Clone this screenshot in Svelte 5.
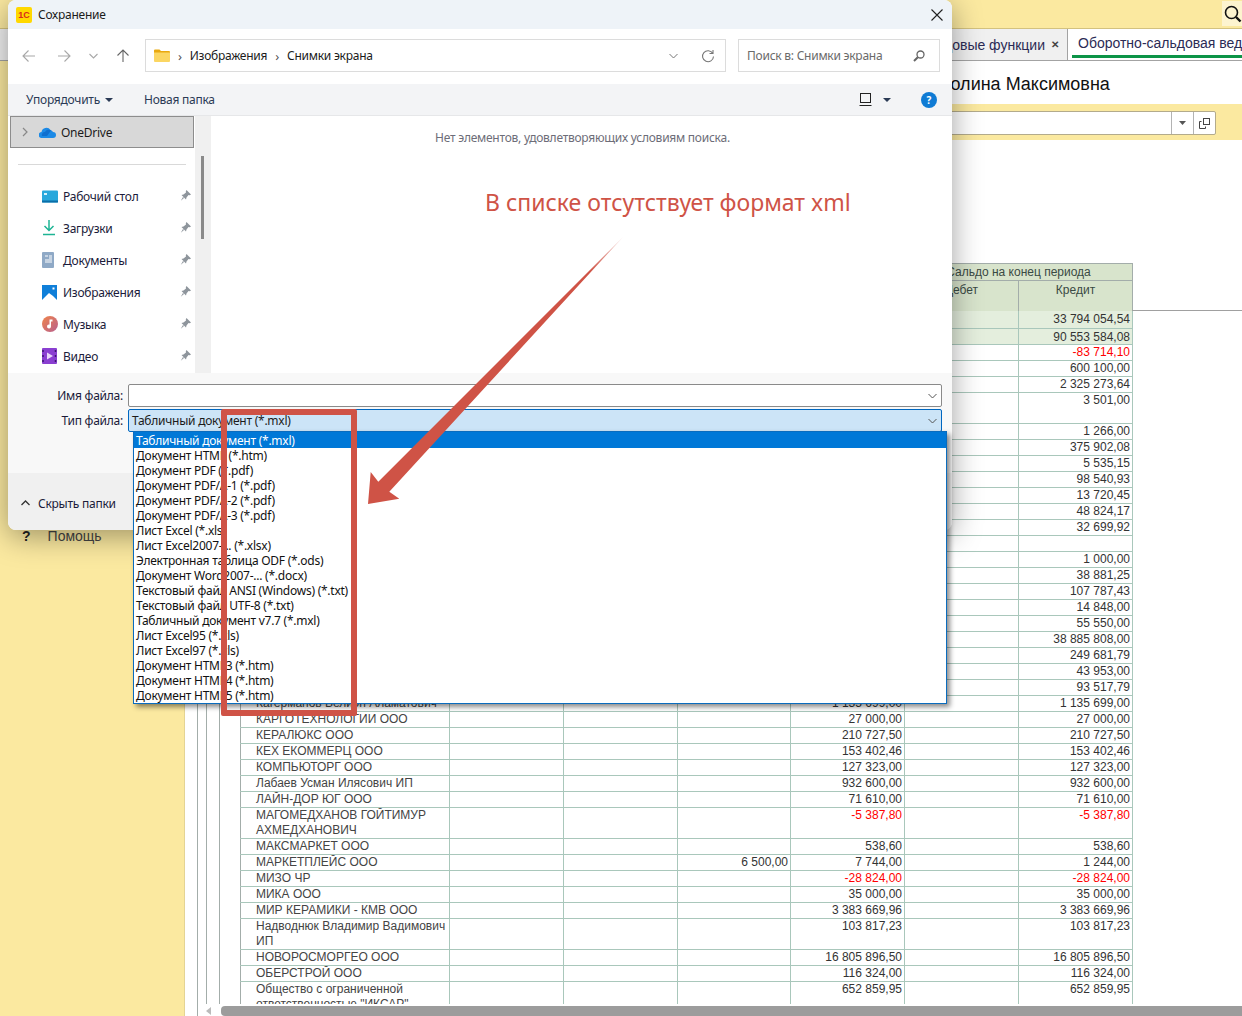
<script>
  const navItems = ['Рабочий стол', 'Загрузки', 'Документы', 'Изображения', 'Музыка', 'Видео'];

  const fileTypes = [
    'Табличный документ (*.mxl)',
    'Документ HTML (*.htm)',
    'Документ PDF (*.pdf)',
    'Документ PDF/A-1 (*.pdf)',
    'Документ PDF/A-2 (*.pdf)',
    'Документ PDF/A-3 (*.pdf)',
    'Лист Excel (*.xls)',
    'Лист Excel2007-... (*.xlsx)',
    'Электронная таблица ODF (*.ods)',
    'Документ Word2007-... (*.docx)',
    'Текстовый файл ANSI (Windows) (*.txt)',
    'Текстовый файл UTF-8 (*.txt)',
    'Табличный документ v7.7 (*.mxl)',
    'Лист Excel95 (*.xls)',
    'Лист Excel97 (*.xls)',
    'Документ HTML3 (*.htm)',
    'Документ HTML4 (*.htm)',
    'Документ HTML5 (*.htm)'
  ];

  // name, оборот дебет, оборот кредит, кредит на конец, height
  const rows = [
    { c: '33 794 054,54', h: 18, total: true },
    { c: '90 553 584,08', total: true },
    { c: '-83 714,10' },
    { c: '600 100,00' },
    { c: '2 325 273,64' },
    { c: '3 501,00', h: 31 },
    { c: '1 266,00' },
    { c: '375 902,08' },
    { c: '5 535,15' },
    { c: '98 540,93' },
    { c: '13 720,45' },
    { c: '48 824,17' },
    { c: '32 699,92' },
    { c: '' },
    { c: '1 000,00' },
    { c: '38 881,25' },
    { c: '107 787,43' },
    { c: '14 848,00' },
    { c: '55 550,00' },
    { c: '38 885 808,00' },
    { c: '249 681,79' },
    { c: '43 953,00' },
    { c: '93 517,79' },
    { name: 'Кагерманов Велиэн Аламатович', b: '1 135 699,00', c: '1 135 699,00' },
    { name: 'КАРГОТЕХНОЛОГИИ ООО', b: '27 000,00', c: '27 000,00' },
    { name: 'КЕРАЛЮКС ООО', b: '210 727,50', c: '210 727,50' },
    { name: 'КЕХ ЕКОММЕРЦ ООО', b: '153 402,46', c: '153 402,46' },
    { name: 'КОМПЬЮТОРГ ООО', b: '127 323,00', c: '127 323,00' },
    { name: 'Лабаев Усман Илясович ИП', b: '932 600,00', c: '932 600,00' },
    { name: 'ЛАЙН-ДОР ЮГ ООО', b: '71 610,00', c: '71 610,00' },
    { name: 'МАГОМЕДХАНОВ ГОЙТИМУР АХМЕДХАНОВИЧ', b: '-5 387,80', c: '-5 387,80', h: 31 },
    { name: 'МАКСМАРКЕТ ООО', b: '538,60', c: '538,60' },
    { name: 'МАРКЕТПЛЕЙС ООО', a: '6 500,00', b: '7 744,00', c: '1 244,00' },
    { name: 'МИЗО ЧР', b: '-28 824,00', c: '-28 824,00' },
    { name: 'МИКА ООО', b: '35 000,00', c: '35 000,00' },
    { name: 'МИР КЕРАМИКИ - КМВ ООО', b: '3 383 669,96', c: '3 383 669,96' },
    { name: 'Надводнюк Владимир Вадимович ИП', b: '103 817,23', c: '103 817,23', h: 31 },
    { name: 'НОВОРОСМОРГЕО ООО', b: '16 805 896,50', c: '16 805 896,50' },
    { name: 'ОБЕРСТРОЙ ООО', b: '116 324,00', c: '116 324,00' },
    { name: 'Общество с ограниченной ответственностью "ИКСАР"', b: '652 859,95', c: '652 859,95', h: 31 }
  ];

  const isNeg = (v) => v && v.startsWith('-');
</script>

<div class="desktop">
  <div class="topbar">
    <span class="search-btn">
      <svg width="18" height="18" viewBox="0 0 18 18" fill="none" stroke="#111" stroke-width="1.6"><circle cx="7.5" cy="7.5" r="6"/><path d="M12 12l4.5 4.5" stroke-width="2.4"/></svg>
    </span>
  </div>
  <div class="tabs">
    <div class="tab">Годовые функции <span class="tab-x">✕</span></div>
    <div class="tab active"><span class="tab-label">Оборотно-сальдовая ведомость</span></div>
  </div>

  <div class="app-body">
    <aside class="sidebar">
      <div class="help"><span class="help-q">?</span>Помощь</div>
    </aside>
    <main class="content">
      <h1 class="title">Каролина Максимовна</h1>
      <div class="band">
        <div class="select">
          <span class="select-btn">
            <svg width="7" height="4" viewBox="0 0 7 4"><path d="M0 0h7L3.5 4z" fill="#555"/></svg>
          </span>
          <span class="select-btn">
            <svg width="11" height="11" viewBox="0 0 11 11" fill="none" stroke="#444"><rect x="4.5" y="0.5" width="6" height="6"/><path d="M2.5 3.5h-2v7h6v-2"/></svg>
          </span>
        </div>
      </div>

      <div class="report">
        <div class="groups">
          <div class="group2"><div class="group3">
            <div class="thead">
              <div class="grid">
                <div class="th empty"></div>
                <div class="th empty"></div>
                <div class="th empty"></div>
                <div class="th empty"></div>
                <div class="th empty"></div>
                <div class="th wide">Сальдо на конец периода</div>
                <div class="th sub">Дебет</div>
                <div class="th sub">Кредит</div>
              </div>
            </div>
            {#each rows as r}
              <div class="row" class:total={r.total} style="height:{r.h ?? 16}px">
                <div class="cell name">{r.name ?? ''}</div>
                <div class="cell"></div>
                <div class="cell"></div>
                <div class="cell num">{r.a ?? ''}</div>
                <div class="cell num" class:neg={isNeg(r.b)}>{r.b ?? ''}</div>
                <div class="cell"></div>
                <div class="cell num" class:neg={isNeg(r.c)}>{r.c}</div>
              </div>
            {/each}
          </div></div>
        </div>
        <div class="hscroll">
          <svg width="6" height="8" viewBox="0 0 6 8"><path d="M5 0v8L0 4z" fill="#bbb"/></svg>
          <div class="hthumb"></div>
        </div>
      </div>
    </main>
  </div>

  <section class="dialog">
    <header class="titlebar">
      <span class="logo">1С</span>
      <span class="dialog-title">Сохранение</span>
      <svg class="close" width="12" height="12" viewBox="0 0 12 12" stroke="#222" stroke-width="1.1"><path d="M.5.5l11 11M11.500.5l-11 11"/></svg>
    </header>

    <div class="navbar">
      <div class="nav-btns">
        <svg width="14" height="14" viewBox="0 0 14 14" fill="none" stroke="#a8a8a8" stroke-width="1.1"><path d="M13 7H1M6.500 1.500L1 7l5.500 5.500"/></svg>
        <svg width="14" height="14" viewBox="0 0 14 14" fill="none" stroke="#a8a8a8" stroke-width="1.1"><path d="M1 7h12M7.500 1.500L13 7l-5.500 5.500"/></svg>
        <svg width="9" height="6" viewBox="0 0 9 6" fill="none" stroke="#a8a8a8" stroke-width="1.100"><path d="M.5 1l4 4 4-4"/></svg>
        <svg width="14" height="14" viewBox="0 0 14 14" fill="none" stroke="#666" stroke-width="1.1"><path d="M7 13V1M1.500 6.500L7 1l5.500 5.500"/></svg>
      </div>
      <div class="address">
        <svg width="16" height="13" viewBox="0 0 16 13"><path d="M0 1.500A1 1 0 0 1 1 .5h4.500l1.500 1.500h8a1 1 0 0 1 1 1V4H0z" fill="#e9a90f"/><path d="M0 3.500h16v8.500a1 1 0 0 1-1 1H1a1 1 0 0 1-1-1z" fill="#fbd662"/></svg>
        <span class="crumb-sep">›</span>
        <span>Изображения</span>
        <span class="crumb-sep">›</span>
        <span>Снимки экрана</span>
        <span class="address-tools">
          <svg width="9" height="6" viewBox="0 0 9 6" fill="none" stroke="#777"><path d="M.5 1l4 4 4-4"/></svg>
          <svg width="14" height="14" viewBox="0 0 14 14" fill="none" stroke="#777" stroke-width="1.1"><path d="M11.800 4.500A5.500 5.500 0 1 0 12.500 7.500M12 1v3.500H8.500"/></svg>
        </span>
      </div>
      <div class="searchbox">
        <span>Поиск в: Снимки экрана</span>
        <svg width="12" height="12" viewBox="0 0 12 12" fill="none" stroke="#666"><circle cx="7.500" cy="4.500" r="3.500" stroke-width="1.300"/><path d="M4.800 7.200L1 11" stroke-width="2"/></svg>
      </div>
    </div>

    <div class="toolbar">
      <span>Упорядочить</span>
      <svg class="caret" width="8" height="4" viewBox="0 0 8 4"><path d="M0 0h8L4 4z" fill="#2b3a55"/></svg>
      <span class="newfolder">Новая папка</span>
      <span class="toolbar-right">
        <svg width="13" height="13" viewBox="0 0 13 13" fill="none" stroke="#222"><rect x="1.500" y="0.500" width="10" height="9"/><path d="M.5 12.500h12" stroke-width="1.200"/></svg>
        <svg class="caret2" width="8" height="4" viewBox="0 0 8 4"><path d="M0 0h8L4 4z" fill="#2b3a55"/></svg>
        <span class="help-circle">?</span>
      </span>
    </div>

    <div class="browser">
      <nav class="tree">
        <div class="onedrive">
          <svg width="6" height="10" viewBox="0 0 6 10" fill="none" stroke="#888" stroke-width="1.200"><path d="M1 1l4 4-4 4"/></svg>
          <svg width="17" height="11" viewBox="0 0 17 11"><path d="M3 11a3 3 0 0 1-.5-6 5 5 0 0 1 9-2 4 4 0 0 1 2.500 2 3 3 0 0 1 0 6z" fill="#1c8ae6"/><path d="M6 5a4 4 0 0 1 6-1.500L8 9H3a3 3 0 0 1 3-4z" fill="#0f6fcf"/></svg>
          <span>OneDrive</span>
        </div>
        <div class="tree-sep"></div>
        {#each navItems as item, i}
          <div class="tree-item">
            <span class="tree-icon">
              {#if i === 0}
                <svg width="16" height="13" viewBox="0 0 16 13"><rect width="16" height="12" y="0.500" rx="1" fill="#28a8dc"/><rect x="2" y="3" width="3" height="2" fill="#d5f2fb"/><rect x="0" y="10.500" width="16" height="2" fill="#0b6ea8"/></svg>
              {:else if i === 1}
                <svg width="14" height="16" viewBox="0 0 14 16" fill="none" stroke="#1eb494" stroke-width="1.500"><path d="M7 0v10M2.500 6L7 10.500 11.500 6"/><path d="M1 14.500h12"/></svg>
              {:else if i === 2}
                <svg width="13" height="16" viewBox="0 0 13 16"><rect width="12" height="16" rx="1" fill="#8fa9c6"/><path d="M3 4h3M7 4h3M7 6h3M3 8h7M3 10h7" stroke="#fff" stroke-width="1"/></svg>
              {:else if i === 3}
                <svg width="15" height="15" viewBox="0 0 15 15"><rect width="15" height="15" fill="#0f7fd9"/><path d="M0 15l7-7 4 3 4 4z" fill="#fff"/><rect x="10.500" y="2.500" width="2" height="2" fill="#fff"/></svg>
              {:else if i === 4}
                <svg width="16" height="16" viewBox="0 0 16 16"><defs><linearGradient id="mus" x1="0" y1="0" x2="1" y2="1"><stop offset="0" stop-color="#f0844a"/><stop offset="1" stop-color="#b8608f"/></linearGradient></defs><circle cx="8" cy="8" r="8" fill="url(#mus)"/><path d="M7.500 3.500h3v2h-1.500v5a2 2 0 1 1-1.500-2z" fill="#fff"/></svg>
              {:else}
                <svg width="15" height="16" viewBox="0 0 15 16"><rect width="15" height="16" rx="1" fill="#8a3fd1"/><path d="M5 4.500l6 3.500-6 3.500z" fill="#e8d6fa"/><path d="M1 2v2M1 7v2M1 12v2M13.500 2v2M13.500 7v2M13.500 12v2" stroke="#3c1670" stroke-width="1.500"/></svg>
              {/if}
            </span>
            <span>{item}</span>
            <svg class="pin" width="11" height="11" viewBox="0 0 11 11"><path d="M6.500 0L11 4.500 9.800 5.200 8.500 5 6.500 7.500 6 9.500 1.500 5 3.500 4.500 6 2.500 5.800 1.200zM3 7l1 1L.8 10.800z" fill="#8e959c"/></svg>
          </div>
        {/each}
      </nav>
      <div class="tree-scroll"><div class="tree-thumb"></div></div>
      <div class="files">
        <p class="empty-msg">Нет элементов, удовлетворяющих условиям поиска.</p>
      </div>
    </div>

    <div class="form">
      <div class="form-row">
        <span class="form-label">Имя файла:</span>
        <div class="field">
          <svg width="9" height="6" viewBox="0 0 9 6" fill="none" stroke="#555"><path d="M.5 1l4 4 4-4"/></svg>
        </div>
      </div>
      <div class="form-row">
        <span class="form-label">Тип файла:</span>
        <div class="field combo">
          <span>Табличный документ (*.mxl)</span>
          <svg width="9" height="6" viewBox="0 0 9 6" fill="none" stroke="#555"><path d="M.5 1l4 4 4-4"/></svg>
        </div>
      </div>
    </div>

    <footer class="dialog-footer">
      <svg width="9" height="6" viewBox="0 0 9 6" fill="none" stroke="#333" stroke-width="1.300"><path d="M.5 5l4-4 4 4"/></svg>
      <span>Скрыть папки</span>
    </footer>
  </section>

  <ul class="dropdown">
    {#each fileTypes as t, i}
      <li class:selected={i === 0}>{t}</li>
    {/each}
  </ul>

  <div class="note">В списке отсутствует формат xml</div>
  <div class="redbox"></div>
  <svg class="arrow" width="1242" height="1016" viewBox="0 0 1242 1016">
    <defs>
      <linearGradient id="fade" gradientUnits="userSpaceOnUse" x1="623" y1="237" x2="590" y2="272">
        <stop offset="0" stop-color="#cf5346" stop-opacity="0.2"/>
        <stop offset="1" stop-color="#cf5346"/>
      </linearGradient>
    </defs>
    <polygon points="623.300,236.700 389.300,491.700 399.300,498.700 368,504 370.700,472 378.300,481.700" fill="url(#fade)"/>
  </svg>
</div>

<style>
  :global(body) {
    margin: 0;
    overflow: hidden;
  }

  .desktop {
    position: relative;
    width: 1242px;
    height: 1016px;
    overflow: hidden;
    background: #fbe9a0;
    font-family: "Liberation Sans", Arial, sans-serif;
    font-size: 12px;
    color: #333;
  }

  /* 1C app behind the dialog */
  .topbar {
    height: 28px;
    border-bottom: 1px solid #d3c27f;
    display: flex;
    justify-content: flex-end;
  }
  .search-btn {
    width: 20px;
    height: 25px;
    margin-top: 1px;
    background: #fdf4cf;
    display: flex;
    align-items: center;
    padding-left: 2px;
    box-sizing: border-box;
  }
  .tabs {
    height: 31px;
    background: #f0f0f0;
    border-bottom: 1px solid #a3a3a3;
    display: flex;
    justify-content: flex-end;
    font-size: 14px;
  }
  .tab {
    display: flex;
    align-items: center;
    gap: 6px;
    padding: 0 8px;
    color: #2b2b55;
    border-right: 1px solid #a3a3a3;
    white-space: nowrap;
  }
  .tab-x {
    font-size: 10px;
    font-weight: bold;
    color: #444;
  }
  .tab.active {
    width: 174px;
    box-sizing: border-box;
    background: #fff;
    border-right: 0;
    padding: 0 0 0 4px;
    overflow: hidden;
    align-items: stretch;
  }
  .tab-label {
    display: block;
    flex: 1;
    padding: 0 0 0 6px;
    line-height: 28px;
    border-bottom: 3px solid #0c9447;
    height: 26px;
    margin-top: 0;
  }

  .app-body {
    display: flex;
    height: 956px;
  }
  .sidebar {
    width: 185px;
    flex: none;
    background: #fbe9a0;
    border-right: 1px solid #e4d494;
    box-sizing: border-box;
  }
  .help {
    margin-top: 467px;
    padding-left: 22px;
    font-size: 14px;
    color: #444;
    display: flex;
    gap: 17px;
  }
  .help-q {
    color: #222;
    font-weight: bold;
  }
  .content {
    flex: 1;
    background: #fff;
    min-width: 0;
    display: flex;
    flex-direction: column;
  }
  .title {
    margin: 0;
    height: 43px;
    padding: 13px 0 0 735px;
    box-sizing: border-box;
    font-size: 18px;
    line-height: 20px;
    font-weight: normal;
    color: #111;
    white-space: nowrap;
  }
  .band {
    height: 36px;
    background: #fbe9a0;
    padding: 7px 26px 0 0;
    box-sizing: border-box;
  }
  .select {
    height: 24px;
    background: #fff;
    border: 1px solid #b3ab8c;
    border-radius: 2px;
    box-sizing: border-box;
    display: flex;
    justify-content: flex-end;
  }
  .select-btn {
    width: 21px;
    border-left: 1px solid #b3b3b3;
    display: flex;
    align-items: center;
    justify-content: center;
  }

  .report {
    flex: 1;
    margin: 123px 0 0 12px;
    border-left: 1px solid #a3adaa;
    display: flex;
    flex-direction: column;
    min-height: 0;
  }
  .groups {
    height: 741px;
    overflow: hidden;
    padding-left: 8px;
  }
  .group2 {
    border-left: 1px solid #a3adaa;
    padding-left: 12px;
    height: 100%;
  }
  .group3 {
    border-left: 1px solid #a3adaa;
    padding-left: 20px;
    height: 100%;
  }
  .thead {
    border-bottom: 1px solid #a0a0a0;
  }
  .grid {
    display: grid;
    grid-template-columns: 209px 114px 114px 113px 114px 114px 114px;
    grid-template-rows: 17px 30px;
    width: 893px;
    border-right: 1px solid #a3adaa;
    border-top: 1px solid #a3adaa;
    box-sizing: border-box;
    height: 47px;
  }
  .th {
    background: #d8e4cc;
    border-left: 1px solid #a3adaa;
    text-align: center;
    color: #3a4a44;
    line-height: 16px;
  }
  .th.empty {
    grid-row: span 2;
  }
  .th.wide {
    grid-column: span 2;
    border-bottom: 1px solid #a3adaa;
  }
  .th.sub {
    padding-top: 1px;
  }
  .row {
    display: grid;
    grid-template-columns: 209px 114px 114px 113px 114px 114px 114px;
    width: 893px;
    box-sizing: border-box;
    border-bottom: 1px solid #a9c7bb;
    border-right: 1px solid #a9c7bb;
  }
  .row.total {
    background: #e4eedd;
  }
  .cell {
    border-left: 1px solid #a9c7bb;
    line-height: 15px;
    color: #333;
    overflow: hidden;
    min-width: 0;
  }
  .cell.name {
    padding-left: 15px;
    border-left-color: #a3adaa;
    color: #444;
  }
  .cell.num {
    text-align: right;
    padding-right: 2px;
    white-space: nowrap;
  }
  .row.total .cell.num {
    padding-top: 1px;
  }
  .neg {
    color: #f00 !important;
  }
  .hscroll {
    height: 10px;
    margin-top: 2px;
    display: flex;
    align-items: center;
    padding-left: 8px;
    gap: 9px;
  }
  .hthumb {
    flex: 1;
    height: 10px;
    background: #9c9c9c;
    border-radius: 4px 0 0 4px;
  }

  /* save dialog */
  .dialog {
    position: absolute;
    left: 8px;
    top: 0;
    width: 944px;
    height: 530px;
    background: #fff;
    border-radius: 8px 8px 8px 8px;
    box-shadow: 0 6px 30px rgba(0, 0, 0, 0.38);
    display: flex;
    flex-direction: column;
    overflow: hidden;
    font-family: "Noto Sans", "Open Sans", sans-serif;
    font-size: 12px;
    letter-spacing: -0.25px;
    color: #1b1b1b;
  }
  .titlebar {
    height: 29px;
    flex: none;
    background: #eef3f8;
    display: flex;
    align-items: center;
    padding-left: 8px;
    gap: 6px;
    position: relative;
  }
  .logo {
    width: 16px;
    height: 16px;
    background: #ffd800;
    border-radius: 2px;
    color: #d92a1c;
    font: bold 9px/16px "Liberation Sans", sans-serif;
    text-align: center;
    letter-spacing: 0;
  }
  .close {
    margin-left: auto;
    margin-right: 9px;
  }
  .navbar {
    height: 55px;
    flex: none;
    display: flex;
    align-items: flex-start;
    padding-top: 10px;
    box-sizing: border-box;
  }
  .nav-btns {
    width: 137px;
    height: 33px;
    display: flex;
    align-items: center;
    gap: 0;
    padding-left: 14px;
    box-sizing: border-box;
  }
  .nav-btns svg:nth-child(2) {
    margin-left: 21px;
  }
  .nav-btns svg:nth-child(3) {
    margin-left: 18px;
  }
  .nav-btns svg:nth-child(4) {
    margin-left: 18px;
  }
  .address {
    width: 581px;
    height: 33px;
    border: 1px solid #dcdcdc;
    box-sizing: border-box;
    display: flex;
    align-items: center;
    padding-left: 8px;
    gap: 7px;
  }
  .crumb-sep {
    color: #555;
    font-size: 13px;
    margin: 0 1px;
  }
  .address-tools {
    margin-left: auto;
    margin-right: 10px;
    display: flex;
    align-items: center;
    gap: 23px;
  }
  .searchbox {
    width: 202px;
    height: 33px;
    margin-left: 12px;
    border: 1px solid #dcdcdc;
    box-sizing: border-box;
    display: flex;
    align-items: center;
    justify-content: space-between;
    padding: 0 14px 0 8px;
    color: #6a6a6a;
  }
  .toolbar {
    height: 32px;
    flex: none;
    background: #f3f4f6;
    border-bottom: 1px solid #e6e7e9;
    box-sizing: border-box;
    display: flex;
    align-items: center;
    padding-left: 18px;
    color: #2b3a55;
  }
  .caret {
    margin-left: 5px;
  }
  .newfolder {
    margin-left: 31px;
  }
  .toolbar-right {
    margin-left: auto;
    margin-right: 15px;
    display: flex;
    align-items: center;
  }
  .caret2 {
    margin-left: 11px;
    margin-right: 30px;
  }
  .help-circle {
    width: 16px;
    height: 16px;
    border-radius: 50%;
    background: #0f7bd4;
    color: #fff;
    font-weight: bold;
    font-size: 10px;
    line-height: 16px;
    text-align: center;
    letter-spacing: 0;
  }
  .browser {
    height: 257px;
    flex: none;
    display: flex;
    overflow: hidden;
  }
  .tree {
    width: 187px;
    flex: none;
  }
  .onedrive {
    margin-left: 2px;
    width: 184px;
    height: 32px;
    box-sizing: border-box;
    background: #d8d8d8;
    border: 1px solid #8d8d8d;
    display: flex;
    align-items: center;
    padding-left: 11px;
    gap: 11px;
  }
  .onedrive span {
    margin-left: -6px;
  }
  .tree-sep {
    height: 1px;
    margin: 16px 9px 0 10px;
    background: #d9d9d9;
  }
  .tree-item {
    height: 32px;
    display: flex;
    align-items: center;
    position: relative;
    color: #1b1b3a;
  }
  .tree-item:first-of-type,
  .tree-sep + .tree-item {
    margin-top: 15px;
  }
  .tree-icon {
    width: 21px;
    margin-left: 34px;
    display: flex;
    align-items: center;
  }
  .pin {
    position: absolute;
    right: 4px;
    top: 10px;
  }
  .tree-scroll {
    width: 16px;
    flex: none;
    background: #f0f0f0;
  }
  .tree-thumb {
    width: 3px;
    height: 83px;
    margin: 40px 0 0 6px;
    background: #8a8a8a;
  }
  .files {
    flex: 1;
    margin-left: 2px;
    text-align: center;
  }
  .empty-msg {
    margin: 14px 0 0;
    color: #6d6d78;
    line-height: 16px;
  }
  .form {
    height: 100px;
    flex: none;
    background: #f8f8f8;
    padding-top: 11px;
    box-sizing: border-box;
  }
  .form-row {
    display: flex;
    align-items: center;
    margin-bottom: 2px;
  }
  .form-label {
    width: 120px;
    flex: none;
    text-align: right;
    padding-right: 5px;
    box-sizing: border-box;
    color: #1b1b3a;
  }
  .field {
    width: 814px;
    height: 23px;
    box-sizing: border-box;
    background: #fff;
    border: 1px solid #8a8a8a;
    border-radius: 2px;
    display: flex;
    align-items: center;
    justify-content: flex-end;
    padding: 0 4px 0 3px;
  }
  .field.combo {
    background: #cce4f7;
    border-color: #0067c0;
    justify-content: space-between;
  }
  .dialog-footer {
    flex: 1;
    background: #f0f0f0;
    display: flex;
    align-items: center;
    gap: 8px;
    padding: 3px 0 0 13px;
    color: #1b1b3a;
  }

  /* open combobox list, annotations */
  .dropdown {
    position: absolute;
    left: 133px;
    top: 431px;
    width: 814px;
    height: 273px;
    box-sizing: border-box;
    margin: 0;
    padding: 0;
    list-style: none;
    background: #fff;
    border: 1px solid #0a6cbe;
    box-shadow: 3px 3px 5px rgba(0, 0, 0, 0.45);
    font-family: "Noto Sans", "Open Sans", sans-serif;
    font-size: 12px;
    letter-spacing: -0.25px;
    color: #111;
  }
  .dropdown li {
    height: 15px;
    line-height: 15px;
    padding-left: 2px;
    white-space: nowrap;
  }
  .dropdown li.selected {
    height: 16px;
    line-height: 17px;
    background: #0078d7;
    color: #fff;
  }
  .note {
    position: absolute;
    left: 485px;
    top: 186px;
    font-family: "Noto Sans", "Open Sans", sans-serif;
    font-size: 23px;
    line-height: 32px;
    color: #cf5346;
    white-space: nowrap;
  }
  .redbox {
    position: absolute;
    left: 221px;
    top: 409px;
    width: 136px;
    height: 307px;
    box-sizing: border-box;
    border: 6px solid #cf5346;
    border-radius: 2px;
  }
  .arrow {
    position: absolute;
    left: 0;
    top: 0;
    pointer-events: none;
  }
</style>
